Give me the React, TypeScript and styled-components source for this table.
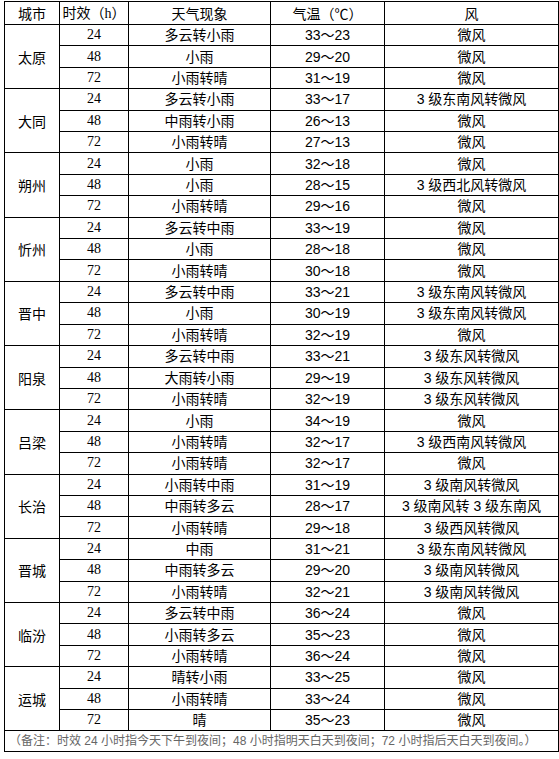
import styled, { createGlobalStyle } from 'styled-components';

const GlobalStyle = createGlobalStyle`
  html, body {
    margin: 0;
    padding: 0;
    background: #fff;
  }
  body {
    font-family: 'Liberation Sans', 'Noto Sans CJK SC', sans-serif;
    color: #000;
  }
`;

const Page = styled.div`
  padding: 1px 0 0 4px;
`;

const Table = styled.table`
  width: 549px;
  border-collapse: collapse;
  table-layout: fixed;
  border: 1px solid #000;
  font-size: 14px;
  line-height: 18px;
`;

const HeadRow = styled.tr`
  height: 23px;
`;

const Row = styled.tr`
  height: 21.42px;
`;

const HeadCell = styled.th<{ $w: number }>`
  width: ${(p) => p.$w}px;
  padding: 0;
  border: 1px solid #000;
  font-weight: normal;
  text-align: center;
  vertical-align: middle;
  font-family: 'Noto Sans CJK SC', sans-serif;
`;

const Latin = styled.span`
  font-family: 'Liberation Serif', serif;
`;

const Cell = styled.td<{ $serif?: boolean }>`
  padding: 0;
  border: 1px solid #000;
  text-align: center;
  vertical-align: middle;
  white-space: nowrap;
  font-family: ${(p) =>
    p.$serif
      ? "'Liberation Serif', 'Noto Sans CJK SC', serif"
      : "'Liberation Sans', 'Noto Sans CJK SC', sans-serif"};
`;

const CityCell = styled(Cell)`
  font-family: 'Noto Sans CJK SC', sans-serif;
`;

const NoteCell = styled.td`
  height: 20px;
  padding: 0 0 0 4px;
  border: 1px solid #000;
  text-align: left;
  vertical-align: middle;
  font-size: 12px;
  color: #666;
  white-space: nowrap;
  font-family: 'Liberation Sans', 'Noto Sans CJK SC', sans-serif;
`;

type Forecast = [string, string, string];

interface City {
  name: string;
  rows: Forecast[];
}

const cities: City[] = [
  { name: '太原', rows: [['多云转小雨', '33～23', '微风'], ['小雨', '29～20', '微风'], ['小雨转晴', '31～19', '微风']] },
  { name: '大同', rows: [['多云转小雨', '33～17', '3 级东南风转微风'], ['中雨转小雨', '26～13', '微风'], ['小雨转晴', '27～13', '微风']] },
  { name: '朔州', rows: [['小雨', '32～18', '微风'], ['小雨', '28～15', '3 级西北风转微风'], ['小雨转晴', '29～16', '微风']] },
  { name: '忻州', rows: [['多云转中雨', '33～19', '微风'], ['小雨', '28～18', '微风'], ['小雨转晴', '30～18', '微风']] },
  { name: '晋中', rows: [['多云转中雨', '33～21', '3 级东南风转微风'], ['小雨', '30～19', '3 级东南风转微风'], ['小雨转晴', '32～19', '微风']] },
  { name: '阳泉', rows: [['多云转中雨', '33～21', '3 级东风转微风'], ['大雨转小雨', '29～19', '3 级东风转微风'], ['小雨转晴', '32～19', '3 级东风转微风']] },
  { name: '吕梁', rows: [['小雨', '34～19', '微风'], ['小雨转晴', '32～17', '3 级西南风转微风'], ['小雨转晴', '32～17', '微风']] },
  { name: '长治', rows: [['小雨转中雨', '31～19', '3 级南风转微风'], ['中雨转多云', '28～17', '3 级南风转 3 级东南风'], ['小雨转晴', '29～18', '3 级西风转微风']] },
  { name: '晋城', rows: [['中雨', '31～21', '3 级东南风转微风'], ['中雨转多云', '29～20', '3 级南风转微风'], ['小雨转晴', '32～21', '3 级南风转微风']] },
  { name: '临汾', rows: [['多云转中雨', '36～24', '微风'], ['小雨转多云', '35～23', '微风'], ['小雨转晴', '36～24', '微风']] },
  { name: '运城', rows: [['晴转小雨', '33～25', '微风'], ['小雨转晴', '33～24', '微风'], ['晴', '35～23', '微风']] },
];

const hours = ['24', '48', '72'];

export default function App() {
  return (
    <Page>
      <GlobalStyle />
      <Table>
        <thead>
          <HeadRow>
            <HeadCell $w={54}>城市</HeadCell>
            <HeadCell $w={68}>
              时效（<Latin>h</Latin>）
            </HeadCell>
            <HeadCell $w={141}>天气现象</HeadCell>
            <HeadCell $w={113}>气温（℃）</HeadCell>
            <HeadCell $w={173}>风</HeadCell>
          </HeadRow>
        </thead>
        <tbody>
          {cities.map((city) =>
            city.rows.map(([weather, temp, wind], i) => (
              <Row key={city.name + i}>
                {i === 0 && <CityCell rowSpan={3}>{city.name}</CityCell>}
                <Cell $serif>{hours[i]}</Cell>
                <Cell>{weather}</Cell>
                <Cell>{temp}</Cell>
                <Cell>{wind}</Cell>
              </Row>
            ))
          )}
          <tr>
            <NoteCell colSpan={5}>
              （备注：时效 24 小时指今天下午到夜间；48 小时指明天白天到夜间；72 小时指后天白天到夜间。）
            </NoteCell>
          </tr>
        </tbody>
      </Table>
    </Page>
  );
}
